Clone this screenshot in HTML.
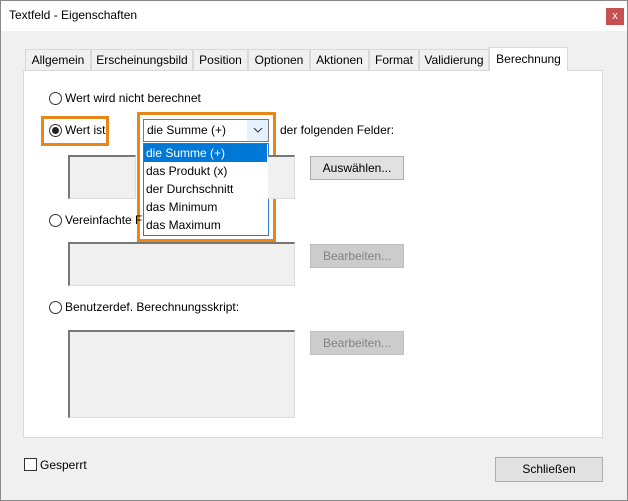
<!DOCTYPE html>
<html><head><meta charset="utf-8"><style>
*{box-sizing:border-box;margin:0;padding:0}
body{width:628px;height:501px;overflow:hidden;background:#f0f0f0;font-family:"Liberation Sans",sans-serif;font-size:12px;color:#000;position:relative}
.a{position:absolute}
.win{left:0;top:0;width:628px;height:501px;border:1px solid #888}
.title{left:1px;top:1px;width:626px;height:30px;background:#fff}
.tab{top:49px;height:21px;border:1px solid #d9d9d9;border-bottom:none;background:#f0f0f0;line-height:20px;text-align:center;font-size:12px}
.panel{left:23px;top:70px;width:580px;height:368px;background:#fff;border:1px solid #d9d9d9}
.radio{width:13px;height:13px;border:1px solid #333;border-radius:50%;background:#fff}
.ta{background:#f0f0f0;border:1px solid #ddd;border-top:2px solid #777;border-left:2px solid #777}
.btn{border:1px solid #adadad;background:#e1e1e1;text-align:center;line-height:22px}
.dis{border-color:#bfbfbf;background:#ccc;color:#838383}
.orange{border:3px solid #e8861a}
.li{left:144px;width:123px;height:18px;line-height:18px;padding-left:2px}
</style></head><body>
<div class="a win"></div>
<div class="a title"></div>
<div class="a" style="left:9px;top:8px;font-size:12px">Textfeld - Eigenschaften</div>
<div class="a" style="left:606px;top:8px;width:18px;height:17px;background:#c75050;color:#fff;text-align:center;line-height:16px;font-size:11px">x</div>

<div class="a panel"></div>
<div class="a tab" style="left:25px;width:66px">Allgemein</div>
<div class="a tab" style="left:91px;width:102px">Erscheinungsbild</div>
<div class="a tab" style="left:193px;width:55px">Position</div>
<div class="a tab" style="left:248px;width:62px">Optionen</div>
<div class="a tab" style="left:310px;width:59px">Aktionen</div>
<div class="a tab" style="left:369px;width:50px">Format</div>
<div class="a tab" style="left:419px;width:70px">Validierung</div>
<div class="a tab" style="left:489px;top:47px;width:79px;height:24px;background:#fff;line-height:22px">Berechnung</div>

<div class="a radio" style="left:49px;top:92px"></div>
<div class="a" style="left:65px;top:91px">Wert wird nicht berechnet</div>

<div class="a orange" style="left:41px;top:116px;width:68px;height:30px"></div>
<div class="a radio" style="left:49px;top:124px"></div>
<div class="a" style="left:52px;top:127px;width:7px;height:7px;border-radius:50%;background:#222"></div>
<div class="a" style="left:65px;top:123px">Wert ist</div>

<div class="a orange" style="left:137px;top:112px;width:139px;height:130px"></div>
<div class="a" style="left:143px;top:119px;width:126px;height:23px;border:1px solid #7a7a7a;background:#fff"></div>
<div class="a" style="left:247px;top:120px;width:21px;height:21px;background:#e5f1fb"></div>
<div class="a" style="left:147px;top:123px">die Summe (+)</div>
<svg class="a" style="left:253px;top:127px" width="10" height="6"><path d="M1 1 L5 5 L9 1" stroke="#333" fill="none"/></svg>
<div class="a" style="left:143px;top:143px;width:126px;height:93px;border:1px solid #2a7ad5;background:#fff"></div>
<div class="a li" style="top:144px;background:#0078d7;color:#fff">die Summe (+)</div>
<div class="a li" style="top:162px">das Produkt (x)</div>
<div class="a li" style="top:180px">der Durchschnitt</div>
<div class="a li" style="top:198px">das Minimum</div>
<div class="a li" style="top:216px">das Maximum</div>

<div class="a" style="left:280px;top:123px">der folgenden Felder:</div>

<div class="a ta" style="left:68px;top:155px;width:68px;height:44px"></div>
<div class="a ta" style="left:268px;top:155px;width:27px;height:44px;border-left:none"></div>
<div class="a btn" style="left:310px;top:156px;width:94px;height:24px">Auswählen...</div>

<div class="a radio" style="left:49px;top:214px"></div>
<div class="a" style="left:65px;top:213px">Vereinfachte F</div>
<div class="a ta" style="left:68px;top:242px;width:227px;height:44px"></div>
<div class="a btn dis" style="left:310px;top:244px;width:94px;height:24px">Bearbeiten...</div>

<div class="a radio" style="left:49px;top:301px"></div>
<div class="a" style="left:65px;top:300px">Benutzerdef. Berechnungsskript:</div>
<div class="a ta" style="left:68px;top:330px;width:227px;height:88px"></div>
<div class="a btn dis" style="left:310px;top:331px;width:94px;height:24px">Bearbeiten...</div>

<div class="a" style="left:24px;top:458px;width:13px;height:13px;border:1px solid #333;background:#fff"></div>
<div class="a" style="left:40px;top:458px">Gesperrt</div>
<div class="a btn" style="left:495px;top:457px;width:108px;height:25px;line-height:23px">Schließen</div>
</body></html>
